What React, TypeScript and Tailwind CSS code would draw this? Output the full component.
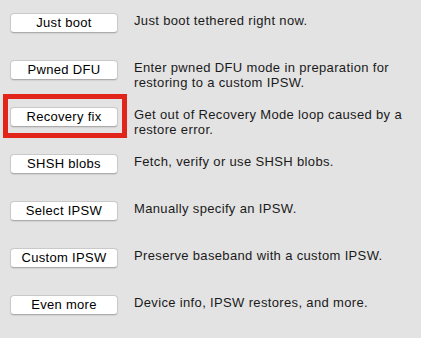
import React from 'react';

const rows = [
  { label: 'Just boot', desc: ['Just boot tethered right now.'] },
  { label: 'Pwned DFU', desc: ['Enter pwned DFU mode in preparation for', 'restoring to a custom IPSW.'] },
  { label: 'Recovery fix', desc: ['Get out of Recovery Mode loop caused by a', 'restore error.'], marked: true },
  { label: 'SHSH blobs', desc: ['Fetch, verify or use SHSH blobs.'] },
  { label: 'Select IPSW', desc: ['Manually specify an IPSW.'] },
  { label: 'Custom IPSW', desc: ['Preserve baseband with a custom IPSW.'] },
  { label: 'Even more', desc: ['Device info, IPSW restores, and more.'] },
];

function MacButton({ label }: { label: string }) {
  return (
    <button className="w-[108px] h-[20px] shrink-0 rounded-[4px] bg-white border border-[#c9c9c9] border-b-[#acacac] shadow-[0_1px_1px_rgba(0,0,0,0.08)] text-[13px] tracking-[0.3px] leading-[18px] text-black text-center">
      {label}
    </button>
  );
}

export default function App() {
  return (
    <div
      className="w-[421px] h-[338px] bg-[#e3e3e3] pt-[13px] pl-[10px] flex flex-col gap-[27px] overflow-hidden"
      style={{ fontFamily: '"Liberation Sans", Arial, sans-serif' }}
    >
      {rows.map((r) => (
        <div key={r.label} className="relative flex items-start gap-[16px] h-[20px]">
          {r.marked && (
            <div className="absolute left-[-7px] top-[-13px] w-[124px] h-[44px] border-[5px] border-[#e1251b]" />
          )}
          <MacButton label={r.label} />
          <div className="text-[13px] tracking-[0.35px] leading-[15px] text-[#1a1a1a] whitespace-nowrap">
            {r.desc.map((l) => (
              <div key={l}>{l}</div>
            ))}
          </div>
        </div>
      ))}
    </div>
  );
}
